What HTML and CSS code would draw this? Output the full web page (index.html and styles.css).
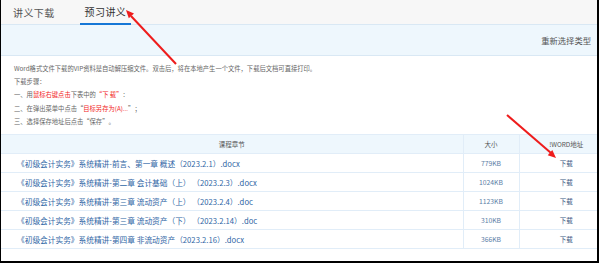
FILE: index.html
```html
<!DOCTYPE html>
<html lang="zh-CN">
<head>
  <meta charset="UTF-8">
  <title>预习讲义</title>
  <link rel="stylesheet" href="styles.css">
</head>
<body>
  <div class="frame">
    <div class="tabs">
      <span class="tab">讲义下载</span>
      <span class="tab active">预习讲义</span>
    </div>

    <div class="type-bar">
      <a class="reselect" href="#">重新选择类型</a>
    </div>

    <div class="notes">
      <p>Word格式文件下载的VIP资料是自动解压缩文件。双击后，将在本地产生一个文件，下载后文档可直接打印。</p>
      <p>下载步骤：</p>
      <p>一、用<span class="red">鼠标右键点击</span>下表中的<span class="red">“下 载”</span>：</p>
      <p>二、在弹出菜单中点击“<span class="red">目标另存为(A)...</span>”；</p>
      <p>三、选择保存地址后点击“保存”。</p>
    </div>

    <table class="files">
      <thead>
        <tr>
          <th class="col-name">课程章节</th>
          <th class="col-size">大小</th>
          <th class="col-link">!WORD地址</th>
        </tr>
      </thead>
      <tbody>
        <tr>
          <td class="name">《初级会计实务》系统精讲-前言、第一章 概述（2023.2.1）.docx</td>
          <td class="size">779KB</td>
          <td class="dl"><a href="#">下载</a></td>
        </tr>
        <tr>
          <td class="name">《初级会计实务》系统精讲-第二章 会计基础（上） （2023.2.3）.docx</td>
          <td class="size">1024KB</td>
          <td class="dl"><a href="#">下载</a></td>
        </tr>
        <tr>
          <td class="name">《初级会计实务》系统精讲-第三章 流动资产（上） （2023.2.4）.doc</td>
          <td class="size">1123KB</td>
          <td class="dl"><a href="#">下载</a></td>
        </tr>
        <tr>
          <td class="name">《初级会计实务》系统精讲-第三章 流动资产（下） （2023.2.14）.doc</td>
          <td class="size">310KB</td>
          <td class="dl"><a href="#">下载</a></td>
        </tr>
        <tr>
          <td class="name">《初级会计实务》系统精讲-第四章 非流动资产（2023.2.16）.docx</td>
          <td class="size">366KB</td>
          <td class="dl"><a href="#">下载</a></td>
        </tr>
      </tbody>
    </table>

    <!-- red annotation arrows drawn over the screenshot -->
    <svg class="marks" width="600" height="264" viewBox="0 0 600 264">
      <line x1="176" y1="64" x2="131" y2="16" stroke="#ee1c1c" stroke-width="2"/>
      <polygon points="126,10 134,13.5 128.8,18.3" fill="#ee1c1c"/>
      <line x1="507" y1="115" x2="551" y2="153" stroke="#ee1c1c" stroke-width="2"/>
      <polygon points="556,158 547.7,155.3 552.3,150.1" fill="#ee1c1c"/>
    </svg>
  </div>
</body>
</html>
```

FILE: styles.css
```css
* {
  box-sizing: border-box;
  margin: 0;
  padding: 0;
}

body {
  font-family: "Noto Sans CJK SC", "Noto Sans", sans-serif;
  background: #ffffff;
  color: #555;
  text-spacing-trim: space-all;
}

.frame {
  position: relative;
  width: 599px;
  height: 263px;
  border-left: 1px solid #000;
  border-right: 2px solid #000;
  border-bottom: 2px solid #000;
  background: #ffffff;
  overflow: hidden;
}

.tabs {
  display: flex;
  height: 25px;
  background: #f7f7f7;
  border-bottom: 1px solid #d9e8f4;
  padding-left: 12px;
  gap: 30px;
}

.tab {
  height: 25px;
  line-height: 25px;
  font-size: 10px;
  letter-spacing: 0.4px;
  color: #555;
}

.tab.active {
  color: #333;
  border-bottom: 2px solid #1677d6;
  padding: 0 5px;
  margin-left: -5px;
  line-height: 23px;
}

.type-bar {
  height: 31px;
  background: #eef7fd;
  border-bottom: 1px solid #d9e8f4;
  display: flex;
  justify-content: flex-end;
  align-items: center;
  padding-right: 6px;
}

.reselect {
  font-size: 8.3px;
  color: #555;
  text-decoration: none;
}

.notes {
  height: 78px;
  padding: 6px 0 0 13px;
  font-size: 6.3px;
  line-height: 13.2px;
  color: #666;
}

.red {
  color: #f21c1c;
}

.files {
  width: 596px;
  border-collapse: collapse;
  table-layout: fixed;
}

.files th,
.files td {
  border: 1px solid #e1edf8;
  height: 19px;
  padding: 0;
  font-size: 6.5px;
  line-height: 17px;
  text-align: center;
  white-space: pre;
  overflow: hidden;
}

.files th {
  background: #eef7fd;
  font-weight: normal;
  color: #555;
}

.files th:first-child,
.files td:first-child {
  border-left: none;
}

.files th:last-child,
.files td:last-child {
  border-right: none;
  padding-left: 16px;
}

.col-name {
  width: 462px;
}

.col-size {
  width: 56px;
}

.files td.name {
  text-align: left;
  padding-left: 16px;
  font-size: 7.7px;
  color: #2f66a5;
}

.files td.size {
  font-size: 6.8px;
  color: #5b7ea6;
}

.dl a {
  color: #3b5a82;
  text-decoration: none;
}

.marks {
  position: absolute;
  top: 0;
  left: -1px;
  pointer-events: none;
}
```
